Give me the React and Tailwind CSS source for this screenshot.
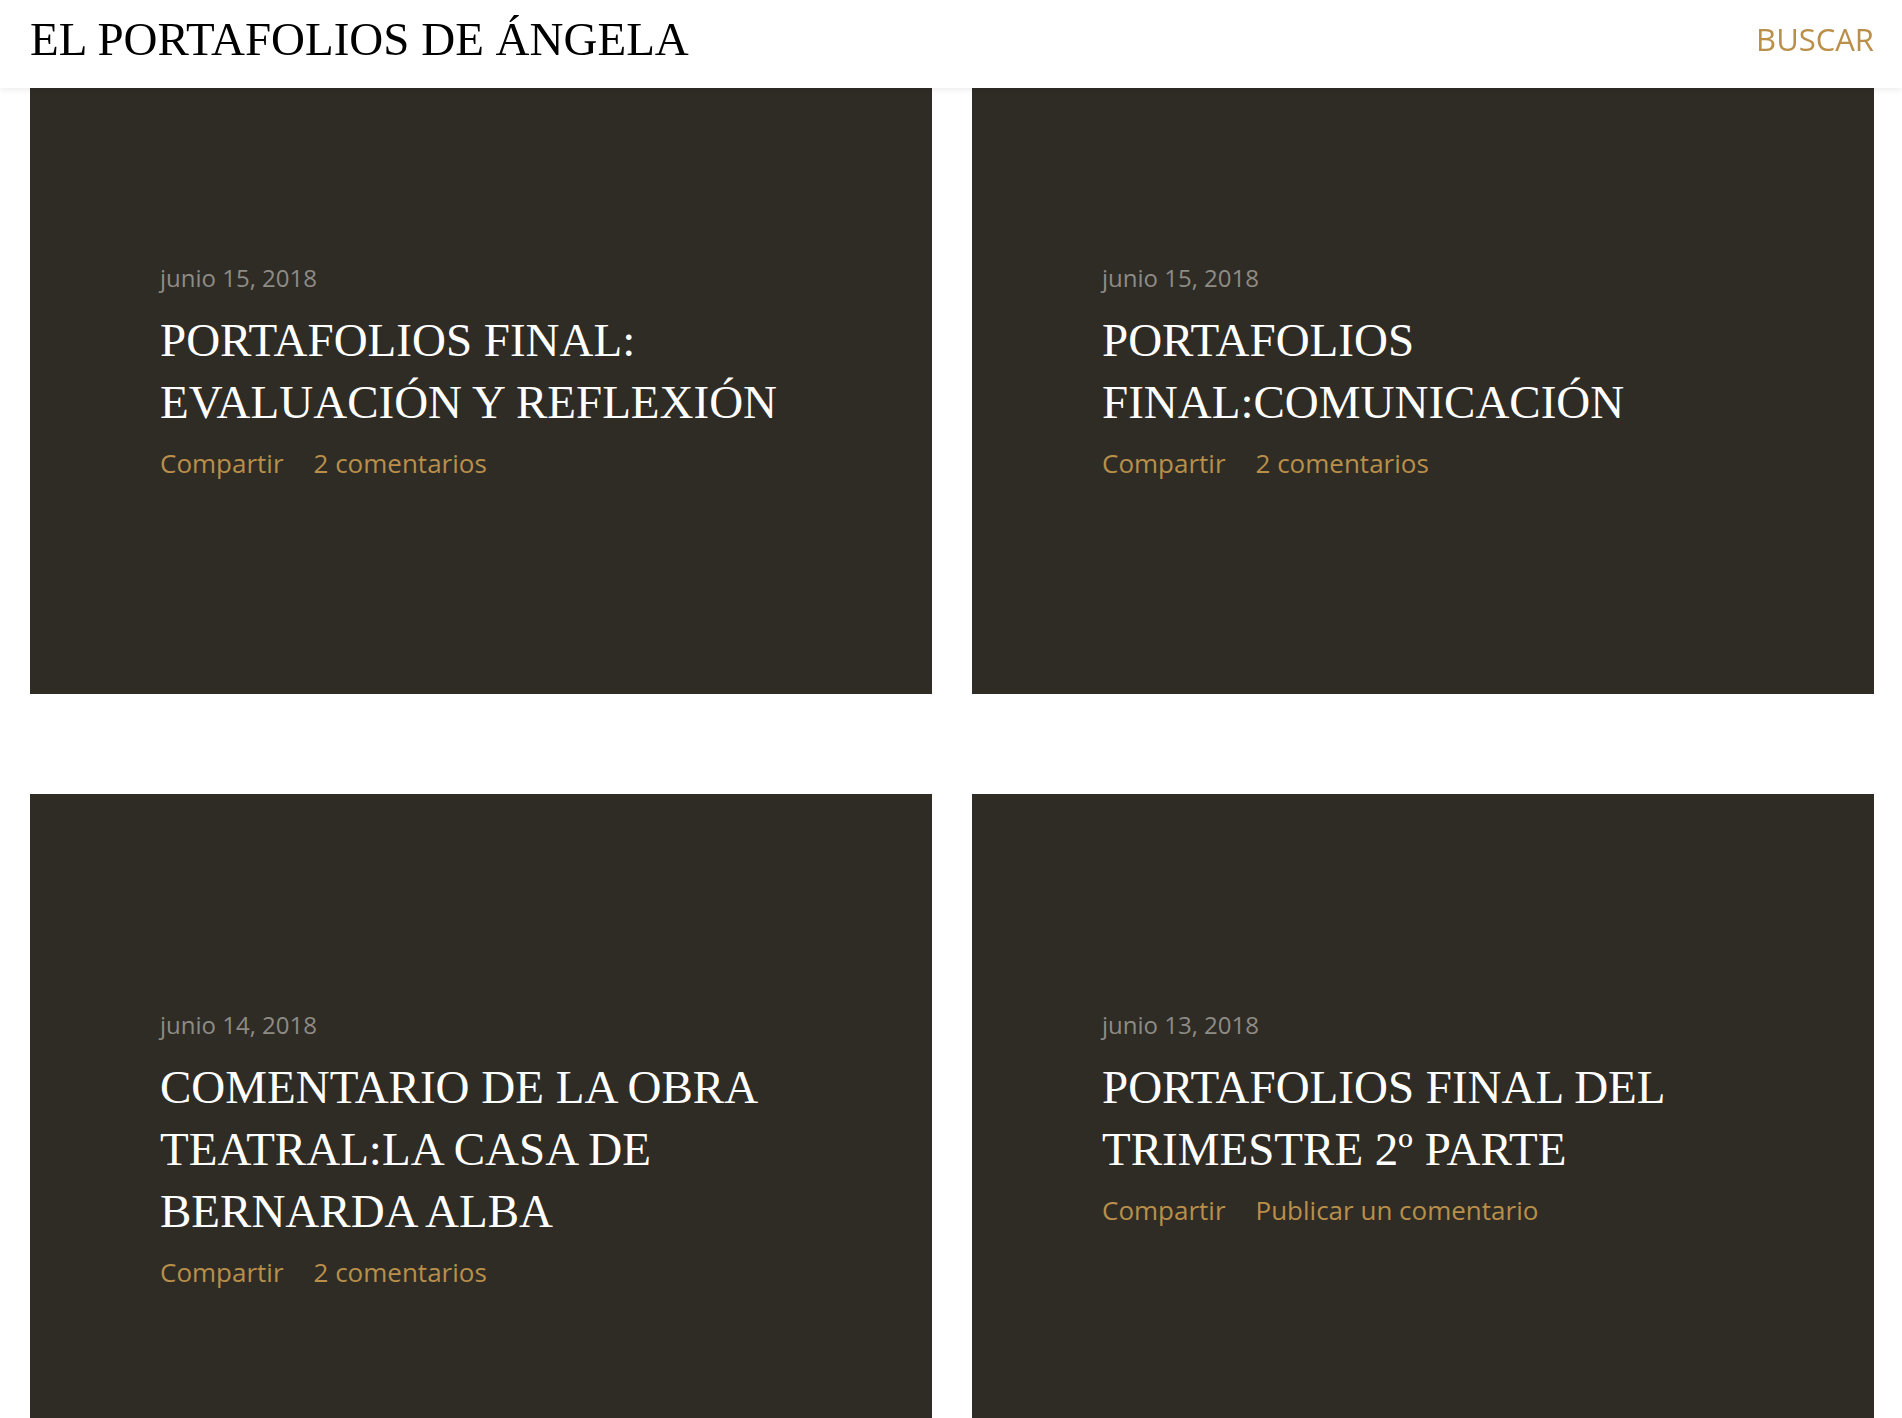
import React from "react";

const POSTS = [
  { date: "junio 15, 2018", title: "PORTAFOLIOS FINAL: EVALUACIÓN Y REFLEXIÓN", comments: "2 comentarios" },
  { date: "junio 15, 2018", title: "PORTAFOLIOS FINAL:COMUNICACIÓN", comments: "2 comentarios" },
  { date: "junio 14, 2018", title: "COMENTARIO DE LA OBRA TEATRAL:LA CASA DE BERNARDA ALBA", comments: "2 comentarios" },
  { date: "junio 13, 2018", title: "PORTAFOLIOS FINAL DEL TRIMESTRE 2º PARTE", comments: "Publicar un comentario" },
];

function PostCard({ post }) {
  return (
    <article className="h-[647px] bg-[#2f2c26] pt-[215px] pl-[130px] pr-[100px]">
      <div className="font-['Open_Sans',sans-serif] text-[24px] leading-[32px] text-[#8e8b85]">{post.date}</div>
      <h2 className="mt-[15px] font-['Liberation_Serif',serif] text-[47px] leading-[62px] text-white">{post.title}</h2>
      <div className="mt-[14px] flex gap-[30px] font-['Open_Sans',sans-serif] text-[26px] leading-[32px] text-[#b98f4a]">
        <a href="#">Compartir</a>
        <a href="#">{post.comments}</a>
      </div>
    </article>
  );
}

export default function App() {
  return (
    <div className="min-h-screen bg-white">
      {/* fixed header, cards slide under it */}
      <header className="fixed inset-x-0 top-0 z-10 flex h-[88px] items-start justify-between bg-white pl-[30px] pr-[28px] shadow-[0_2px_6px_rgba(0,0,0,0.08)]">
        <h1 className="mt-[11px] font-['Liberation_Serif',serif] text-[47px] leading-[56px] text-black">EL PORTAFOLIOS DE ÁNGELA</h1>
        <a href="#" className="mt-[19px] font-['Open_Sans',sans-serif] text-[31px] leading-[40px] text-[#b98f4a]">BUSCAR</a>
      </header>

      <main className="ml-[30px] grid w-[1844px] grid-cols-2 gap-x-[40px] gap-y-[100px] pt-[47px]">
        {POSTS.map((p, i) => <PostCard key={i} post={p} />)}
      </main>
    </div>
  );
}
